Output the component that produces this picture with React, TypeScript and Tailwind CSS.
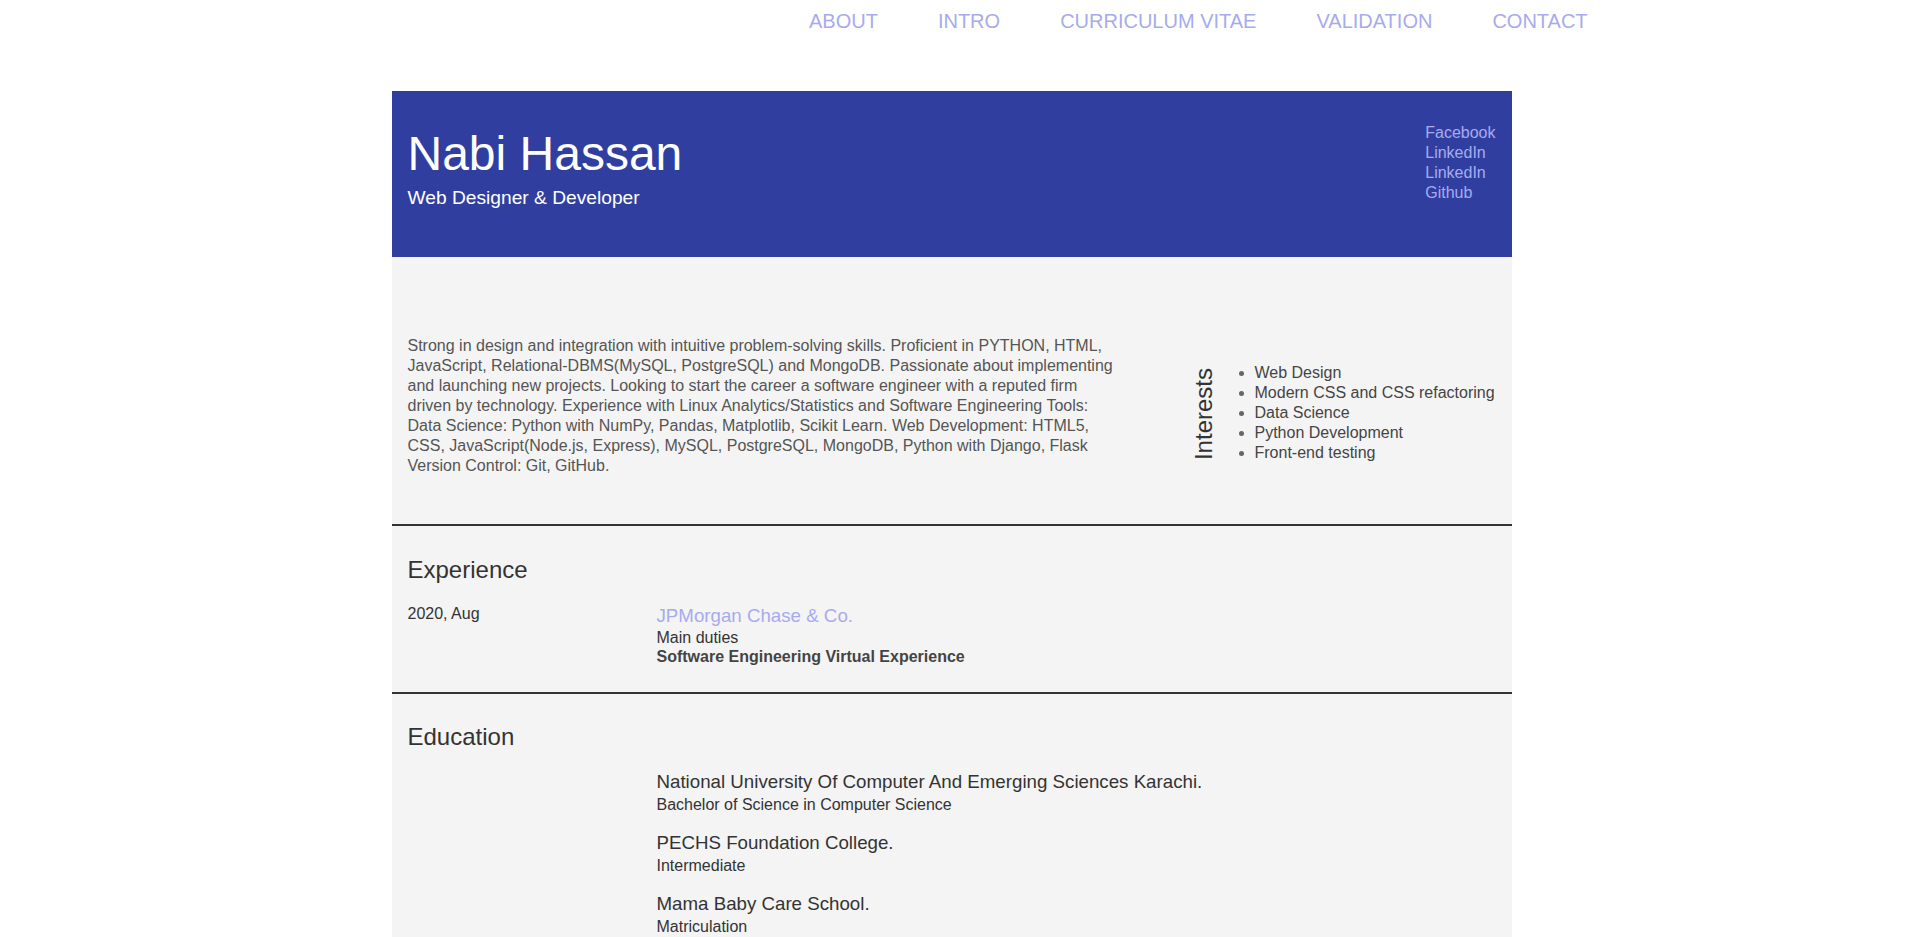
import React from "react";

const navItems = ["ABOUT", "INTRO", "CURRICULUM VITAE", "VALIDATION", "CONTACT"];
const links = ["Facebook", "LinkedIn", "LinkedIn", "Github"];
const interests = [
  "Web Design",
  "Modern CSS and CSS refactoring",
  "Data Science",
  "Python Development",
  "Front-end testing",
];
const education = [
  { school: "National University Of Computer And Emerging Sciences Karachi.", degree: "Bachelor of Science in Computer Science" },
  { school: "PECHS Foundation College.", degree: "Intermediate" },
  { school: "Mama Baby Care School.", degree: "Matriculation" },
];

export default function App() {
  return (
    <div className="w-[1903px] min-h-screen bg-white font-['Liberation_Sans',Arial,sans-serif]">
      <nav className="h-[42px] flex items-center pl-[809px] gap-[60px] text-[20px] leading-[24px] text-[#a7abee]">
        {navItems.map((n) => (
          <a key={n} className="whitespace-nowrap">{n}</a>
        ))}
      </nav>

      <main className="mx-auto w-[1120px] mt-[49px] pb-[40px] bg-[#f4f4f4]">
        <header className="h-[166px] bg-[#303f9f] flex justify-between items-start px-4 pt-[33px]">
          <div>
            <h1 className="text-[48px] leading-[60px] text-white">Nabi Hassan</h1>
            <p className="mt-[1.5px] text-[19.2px] leading-[24px] text-white">Web Designer &amp; Developer</p>
          </div>
          <ul className="text-[16px] leading-[20px] text-[#a7abee] -mt-px">
            {links.map((l, i) => (
              <li key={i}>{l}</li>
            ))}
          </ul>
        </header>

        <section className="flex items-start px-4 pb-[48px]">
          <p className="w-[712px] mt-[79px] text-[16px] leading-[20px] text-[#555]">
            Strong in design and integration with intuitive problem-solving skills. Proficient in PYTHON, HTML, JavaScript,
            Relational-DBMS(MySQL, PostgreSQL) and MongoDB. Passionate about implementing and launching new projects. Looking to
            start the career a software engineer with a reputed firm driven by technology. Experience with Linux
            Analytics/Statistics and Software Engineering Tools: Data Science: Python with NumPy, Pandas, Matplotlib, Scikit
            Learn. Web Development: HTML5, CSS, JavaScript(Node.js, Express), MySQL, PostgreSQL, MongoDB, Python with Django,
            Flask Version Control: Git, GitHub.
          </p>
          <div className="ml-[72px] mt-[106px] flex items-center">
            <h3 className="[writing-mode:vertical-rl] rotate-180 translate-y-[1px] text-[24px] leading-[24px] text-[#333]">Interests</h3>
            <ul className="pl-[39px] list-disc marker:text-[#666] text-[16px] leading-[20px] text-[#444]">
              {interests.map((t) => (
                <li key={t}>{t}</li>
              ))}
            </ul>
          </div>
        </section>

        <section className="border-t-2 border-[#333] px-4 pt-[30px] pb-[26px]">
          <h2 className="text-[24px] leading-[28px] text-[#333]">Experience</h2>
          <div className="flex mt-[20px]">
            <div className="w-[249px] text-[16px] leading-[20px] text-[#333]">2020, Aug</div>
            <div>
              <h3 className="text-[18.72px] leading-[23px] text-[#a7abee]">JPMorgan Chase &amp; Co.</h3>
              <p className="mt-px text-[16px] leading-[20px] text-[#333]">Main duties</p>
              <p className="text-[16px] leading-[18px] font-bold text-[#444]">Software Engineering Virtual Experience</p>
            </div>
          </div>
        </section>

        <section className="border-t-2 border-[#333] px-4 pt-[29px]">
          <h2 className="text-[24px] leading-[28px] text-[#333]">Education</h2>
          <div className="flex mt-[19px]">
            <div className="w-[249px]"></div>
            <div className="flex flex-col gap-[15px]">
              {education.map((e) => (
                <div key={e.school}>
                  <h3 className="text-[18.72px] leading-[24px] text-[#333]">{e.school}</h3>
                  <p className="text-[16px] leading-[22px] text-[#333]">{e.degree}</p>
                </div>
              ))}
            </div>
          </div>
        </section>
      </main>
    </div>
  );
}
